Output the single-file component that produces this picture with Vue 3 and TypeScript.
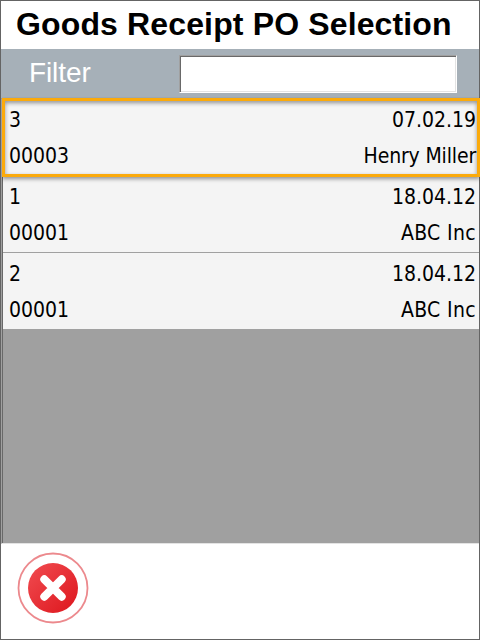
<script setup lang="ts">
import { ref } from 'vue'

interface Receipt {
  id: number
  date: string
  code: string
  vendor: string
}

const receipts: Receipt[] = [
  { id: 3, date: '07.02.19', code: '00003', vendor: 'Henry Miller' },
  { id: 1, date: '18.04.12', code: '00001', vendor: 'ABC Inc' },
  { id: 2, date: '18.04.12', code: '00001', vendor: 'ABC Inc' },
]

const selected = ref(3)
const filter = ref('')
</script>

<template>
  <main class="screen">
    <h1 class="title">Goods Receipt PO Selection</h1>
    <div class="filter">
      <label class="filter-label" for="filter">Filter</label>
      <input id="filter" v-model="filter" class="filter-input" type="text" />
    </div>
    <section class="list">
      <div
        v-for="r in receipts"
        :key="r.id"
        class="row"
        :class="{ selected: r.id === selected }"
        @click="selected = r.id"
      >
        <div class="line"><span>{{ r.id }}</span><span>{{ r.date }}</span></div>
        <div class="line">
          <span>{{ r.code }}</span><span :class="{ name: r.vendor === 'Henry Miller', company: r.vendor !== 'Henry Miller' }">{{ r.vendor }}</span>
        </div>
      </div>
    </section>
    <footer class="footer">
      <button class="cancel" type="button" aria-label="Cancel">
        <svg width="72" height="72" viewBox="0 0 72 72">
          <defs>
            <linearGradient id="red" x1="0" y1="0" x2="1" y2="1">
              <stop offset="0.1" stop-color="#ef474c" />
              <stop offset="0.9" stop-color="#df1b22" />
            </linearGradient>
          </defs>
          <circle cx="36" cy="36" r="34.5" fill="#fff" stroke="#ec898d" stroke-width="1.8" />
          <circle cx="36" cy="36" r="25" fill="url(#red)" />
          <path d="M27.3 27.3 44.7 44.7M44.7 27.3 27.3 44.7" stroke="#fff" stroke-width="8" stroke-linecap="round" />
        </svg>
      </button>
    </footer>
  </main>
</template>

<style>
body {
  margin: 0;
}
</style>

<style scoped>
.screen {
  box-sizing: border-box;
  width: 480px;
  height: 640px;
  display: flex;
  flex-direction: column;
  border: 1px solid #646464;
  background: #fff;
  color: #000;
}
.title {
  margin: 0;
  height: 48px;
  padding-left: 15px;
  font: bold 32px/46px 'Liberation Sans', Arial, sans-serif;
  letter-spacing: 0.14px;
  white-space: nowrap;
}
.filter {
  box-sizing: border-box;
  height: 49px;
  display: flex;
  align-items: flex-start;
  padding: 6px 22px 0 28px;
  background: #a6b0b8;
}
.filter-label {
  width: 150px;
  font: 28px/36px 'Liberation Sans', Arial, sans-serif;
  letter-spacing: -0.1px;
  color: #fff;
}
.filter-input {
  box-sizing: border-box;
  width: 278px;
  height: 38px;
  padding: 0 4px;
  border: 1px solid;
  border-color: #a0a0a0 #fff #fff #a0a0a0;
  border-radius: 0;
  outline: none;
  background: #fff;
  box-shadow: inset 1px 1px #696969, inset -1px -1px #e3e3e3;
  font: 24px 'Liberation Sans', Arial, sans-serif;
}
.list {
  box-sizing: border-box;
  height: 446px;
  border-top: 1px solid #8c8c8c;
  border-left: 1px solid #a0a0a0;
  border-bottom: 1px solid #e3e3e3;
  box-shadow: inset 1px 0 #696969;
  padding-left: 1px;
  background: #a0a0a0;
}
.row {
  box-sizing: border-box;
  position: relative;
  height: 77px;
  padding: 3px 3px 0 6px;
  border-bottom: 1px solid #a0a0a0;
  background: #f4f4f4;
  font: 21px/36px 'DejaVu Sans Condensed', 'DejaVu Sans', sans-serif;
  font-stretch: condensed;
}
.row.selected::after {
  content: '';
  box-sizing: border-box;
  position: absolute;
  z-index: 1;
  inset: -1px -1px -2px -1px;
  border: 3px solid #fbaa0b;
  box-shadow: 0 2px 4px rgba(0, 0, 0, 0.4), inset 0 2px 4px rgba(0, 0, 0, 0.4);
  clip-path: inset(-1px 0 -8px 0);
}
.line {
  display: flex;
  justify-content: space-between;
}
.name {
  letter-spacing: -0.15px;
}
.company {
  letter-spacing: 0.35px;
}
.footer {
  flex: 1;
  padding: 8px 0 0 16px;
}
.cancel {
  display: block;
  padding: 0;
  border: 0;
  background: none;
}
.cancel svg {
  display: block;
}
</style>
